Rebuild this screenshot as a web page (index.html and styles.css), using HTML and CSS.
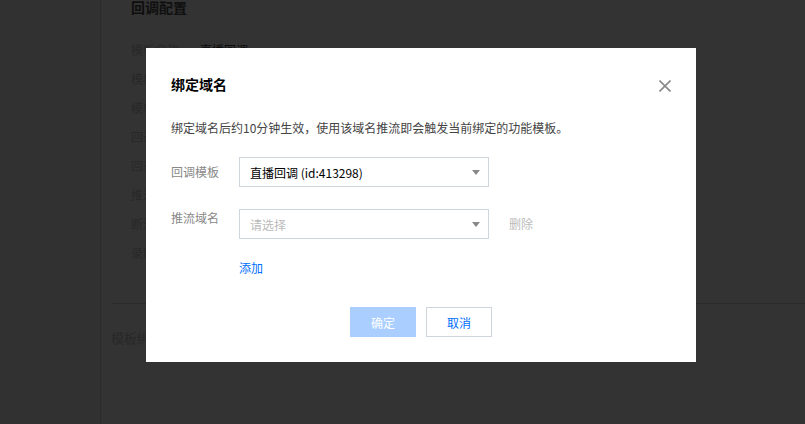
FILE: index.html
```html
<!DOCTYPE html>
<html lang="zh-CN">
<head>
<meta charset="utf-8">
<title>绑定域名</title>
<link rel="stylesheet" href="styles.css">
</head>
<body>
<div class="page">
  <aside class="sidebar"></aside>
  <main class="main">
    <section class="config">
      <h2 class="config-title">回调配置</h2>
      <ul class="config-list">
        <li><span class="k">模板名称</span><span class="v">直播回调</span></li>
        <li><span class="k">模板描述</span></li>
        <li><span class="k">模板类型</span></li>
        <li><span class="k">回调密钥</span></li>
        <li><span class="k">回调地址</span></li>
        <li><span class="k">推流回调</span></li>
        <li><span class="k">断流回调</span></li>
        <li><span class="k">录制回调</span></li>
      </ul>
    </section>
    <div class="divider"></div>
    <section class="bind">
      <p class="bind-title">模板绑定域名</p>
    </section>
  </main>
</div>

<div class="dialog" role="dialog">
  <div class="dialog-head">
    <h3 class="dialog-title">绑定域名</h3>
    <button class="close" aria-label="关闭">
      <svg width="12" height="12" viewBox="0 0 12 12"><path d="M0.5 0.5 L11.5 11.5 M11.5 0.5 L0.5 11.5" stroke="#888" stroke-width="1.6" fill="none"/></svg>
    </button>
  </div>
  <p class="desc">绑定域名后约10分钟生效，使用该域名推流即会触发当前绑定的功能模板。</p>
  <div class="form">
    <div class="row row-center">
      <label class="label">回调模板</label>
      <div class="select">
        <span class="select-text">直播回调 (id:413298)</span>
        <span class="caret"></span>
      </div>
    </div>
    <div class="row row-top">
      <label class="label">推流域名</label>
      <div class="select">
        <span class="select-text placeholder">请选择</span>
        <span class="caret"></span>
      </div>
      <span class="del">删除</span>
    </div>
    <div class="row">
      <span class="label"></span>
      <a class="add">添加</a>
    </div>
  </div>
  <div class="footer">
    <button class="btn btn-primary">确定</button>
    <button class="btn btn-default">取消</button>
  </div>
</div>
</body>
</html>
```

FILE: styles.css
```css
* { box-sizing: border-box; }
html, body { margin: 0; padding: 0; }
body {
  width: 805px;
  height: 424px;
  overflow: hidden;
  background: #333333;
  font-family: "Noto Sans CJK SC", "Noto Sans", sans-serif;
  font-size: 12px;
  position: relative;
}
.page {
  display: flex;
  height: 424px;
}
.sidebar {
  width: 101px;
  flex: none;
  background: #313131;
  border-right: 1px solid #2b2b2b;
}
.main {
  flex: 1;
  background: #333333;
}
.config {
  padding-left: 30px;
}
.config-title {
  margin: 0;
  margin-top: -4px;
  font-size: 14px;
  font-weight: bold;
  line-height: 22px;
  color: #0f0f0f;
}
.config-list {
  list-style: none;
  margin: 0;
  padding: 0;
  margin-top: 17px;
}
.config-list li {
  display: flex;
  height: 29px;
  line-height: 29px;
  font-size: 12px;
}
.config-list .k {
  width: 69px;
  color: #282828;
}
.config-list .v {
  color: #0c0c0c;
}
.divider {
  margin-top: 36px;
  margin-left: 10px;
  border-top: 1px solid #2b2b2b;
}
.bind {
  padding-left: 10px;
}
.bind-title {
  margin: 0;
  margin-top: 25px;
  font-size: 13px;
  line-height: 18px;
  color: #282828;
}

/* dialog */
.dialog {
  position: absolute;
  left: 146px;
  top: 48px;
  width: 550px;
  height: 314px;
  background: #fff;
  padding: 24px 25px 25px 25px;
}
.dialog-head {
  display: flex;
  justify-content: space-between;
  align-items: flex-start;
}
.dialog-title {
  margin: 0;
  font-size: 14px;
  font-weight: bold;
  line-height: 24px;
  color: #000;
}
.close {
  border: 0;
  background: none;
  padding: 0;
  margin-top: 8px;
  width: 12px;
  height: 12px;
  display: block;
}
.close svg { display: block; }
.desc {
  margin: 23px 0 0 0;
  line-height: 18px;
  font-size: 12px;
  color: #444;
}
.form {
  margin-top: 20px;
}
.row {
  display: flex;
  margin-bottom: 22px;
}
.row:last-child { margin-bottom: 0; }
.row-center { align-items: center; }
.row-top { align-items: flex-start; }
.label {
  width: 68px;
  flex: none;
  color: #888;
  font-size: 12px;
  line-height: 18px;
}
.select {
  width: 250px;
  height: 30px;
  border: 1px solid #cfd5de;
  display: flex;
  align-items: center;
  justify-content: space-between;
  padding: 0 8px 0 10px;
}
.select-text {
  color: #000;
  font-size: 12px;
}
.select-text.placeholder { color: #bbb; }
.caret {
  width: 0;
  height: 0;
  border-left: 4px solid transparent;
  border-right: 4px solid transparent;
  border-top: 5px solid #888;
}
.del {
  margin-left: 20px;
  line-height: 30px;
  color: #bbb;
}
.add {
  color: #006eff;
  line-height: 18px;
  margin-top: -2px;
}
.footer {
  display: flex;
  justify-content: center;
  gap: 10px;
  margin-top: 30px;
}
.btn {
  width: 66px;
  height: 30px;
  font-family: inherit;
  font-size: 12px;
  padding: 0;
  border: 1px solid;
}
.btn-primary {
  background: #a9ceff;
  border-color: #a9ceff;
  color: #fff;
}
.btn-default {
  background: #fff;
  border-color: #cfd5de;
  color: #006eff;
}
```
